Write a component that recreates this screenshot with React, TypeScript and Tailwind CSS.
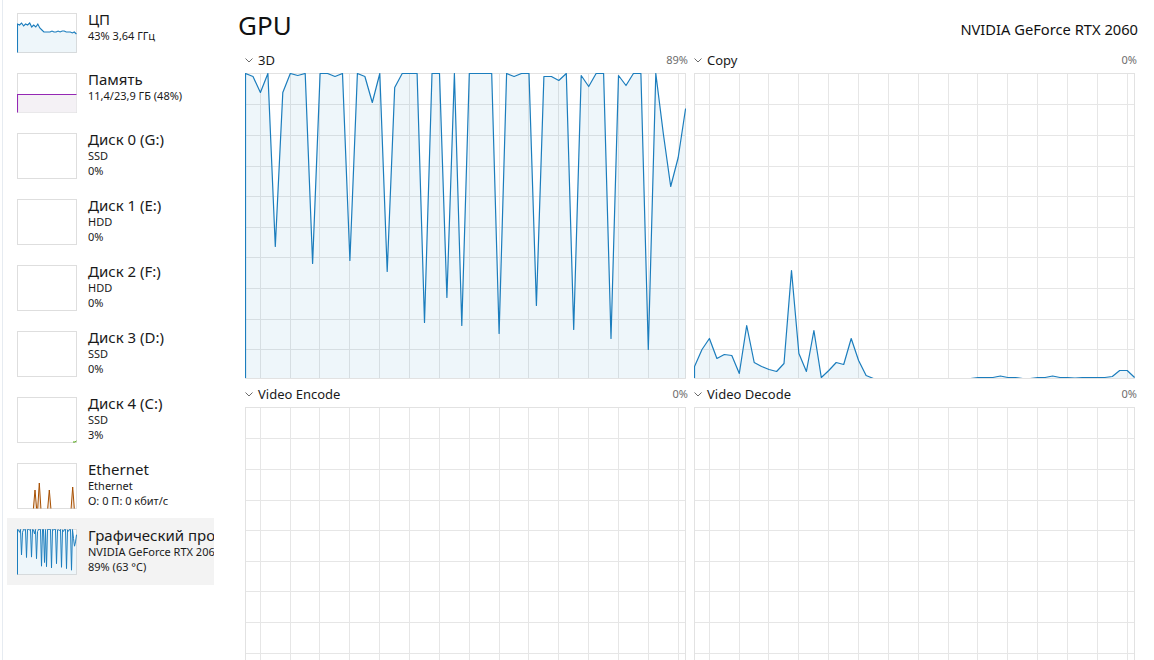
import type { ReactNode } from 'react'

// chart values are pixel offsets from the top of a 441x306 plot (305 = 0%)
const gpu3d = [
  0, 3, 19, 0, 173, 19, 0, 2, 0, 190,
  0, 0, 3, 0, 187, 0, 3, 29, 0, 198,
  14, 0, 0, 0, 249, 0, 0, 224, 0, 252,
  0, 0, 0, 0, 260, 0, 3, 0, 0, 232,
  3, 3, 7, 0, 256, 2, 13, 0, 0, 265,
  2, 12, 0, 0, 276, 0, 60, 113, 84, 35,
]

const copy = [
  293, 276, 265, 285, 281, 282, 300, 252, 289, 293,
  296, 298, 290, 197, 280, 298, 257, 304, 297, 289,
  291, 265, 287, 302, 305, 305, 305, 305, 305, 305,
  305, 305, 305, 305, 305, 305, 305, 305, 304, 304,
  304, 302.5, 304, 304, 305, 305, 304, 304, 302.5, 304,
  304, 304.5, 304, 304, 304, 304, 303, 297, 297, 304,
]

const cpu = [
  11, 12, 10, 13, 11, 12, 10, 14, 12, 14, 11, 15, 17, 19, 19,
  19, 19, 18, 19, 19, 18, 19, 18, 18, 19, 19, 19, 20, 19, 21,
]

const BLUE = '#1b7dbd'

const Chevron = () => (
  <svg width="8" height="5" viewBox="0 0 8 5" className="shrink-0">
    <path d="M0.5 0.5 L4 4 L7.5 0.5" fill="none" stroke="#6b6b6b" strokeWidth="1" />
  </svg>
)

const BigChart = ({ data }: { data?: number[] }) => {
  const w = 441
  const h = 306
  const xs: number[] = []
  for (let x = 14.7; x < w - 3; x += 29.86) xs.push(Math.round(x) + 0.5)
  const ys: number[] = []
  for (let k = 1; k < 10; k++) ys.push(Math.round(k * 30.6 + 0.7) + 0.5)

  const pts = data ? data.map((v, i) => `${(i * 7.46 + 0.5).toFixed(1)},${v + 0.5}`).join(' ') : ''
  const lastX = data ? ((data.length - 1) * 7.46 + 0.5).toFixed(1) : '0'

  return (
    <svg width={w} height={h} className="block shrink-0">
      {xs.map((x) => (
        <line key={'x' + x} x1={x} x2={x} y1={0} y2={h} stroke="#e6e6e6" />
      ))}
      {ys.map((y) => (
        <line key={'y' + y} x1={0} x2={w} y1={y} y2={y} stroke="#e6e6e6" />
      ))}
      <path d={`M0.5 0V${h} M0 0.5H${w} M${w - 0.5} 0V${h}`} fill="none" stroke="#e2e2e2" />
      {data && (
        <>
          <polygon points={`0.5,305.5 ${pts} ${lastX},305.5`} fill="rgba(17,125,187,0.07)" />
          <polyline points={`0.5,305.5 ${pts}`} fill="none" stroke={BLUE} strokeWidth="1.2" strokeLinejoin="round" />
        </>
      )}
      <line x1={0} x2={w} y1={305.5} y2={305.5} stroke="#e2e2e2" />
    </svg>
  )
}

const ChartBlock = ({ label, value, data }: { label: string; value: string; data?: number[] }) => (
  <div className="flex flex-col">
    <div className="flex h-[20px] items-center pt-[1px]">
      <Chevron />
      <span className="ml-[5px] text-[13px] text-[#1a1a1a]">{label}</span>
      <span className="ml-auto text-[11px] text-[#6d6d6d]">{value}</span>
    </div>
    <div className="mt-[3px]">
      <BigChart data={data} />
    </div>
  </div>
)

const Thumb = ({ h, children }: { h: number; children?: ReactNode }) => (
  <svg width="60" height={h} className="block shrink-0">
    <rect x="0.5" y="0.5" width="59" height={h - 1} fill="#fff" stroke="#dedede" />
    {children}
  </svg>
)

const CpuThumb = () => {
  const pts = cpu.map((v, i) => `${(i * 2.03 + 0.5).toFixed(1)},${v}`).join(' ')
  return (
    <Thumb h={40}>
      <polygon points={`0.5,39.5 ${pts} 59.5,39.5`} fill="rgba(17,125,187,0.07)" />
      <polyline points={`0.5,39.5 ${pts}`} fill="none" stroke={BLUE} strokeWidth="1.1" />
    </Thumb>
  )
}

const MemThumb = () => (
  <Thumb h={40}>
    <rect x="0.5" y="21.3" width="59" height="18.2" fill="#f4f1f5" />
    <polyline points="0.5,39.5 0.5,21.5 59.5,21.5" fill="none" stroke="#9528b4" strokeWidth="1.1" />
  </Thumb>
)

const EthThumb = () => {
  const spikes: [number, number][] = [
    [18, 27],
    [22.3, 20],
    [32.3, 27],
    [55.7, 24],
  ]
  return (
    <Thumb h={46}>
      {spikes.map(([x, y]) => (
        <g key={x}>
          <polygon points={`${x - 1.6},45.5 ${x},${y} ${x + 1.6},45.5`} fill="rgba(167,79,1,0.15)" />
          <polyline points={`${x - 1.6},45.5 ${x},${y} ${x + 1.6},45.5`} fill="none" stroke="#a74f01" strokeWidth="1" />
        </g>
      ))}
    </Thumb>
  )
}

const GpuThumb = () => {
  const pts = gpu3d.map((v, i) => `${(i + 0.5).toFixed(1)},${(v * 45 / 305 + 0.5).toFixed(1)}`).join(' ')
  return (
    <Thumb h={46}>
      <polygon points={`0.5,45.5 ${pts} 59.5,45.5`} fill="rgba(17,125,187,0.07)" />
      <polyline points={`0.5,45.5 ${pts}`} fill="none" stroke={BLUE} strokeWidth="1" />
    </Thumb>
  )
}

const DiskThumb = ({ activity }: { activity?: boolean }) => (
  <Thumb h={46}>
    {activity && <polyline points="56,45 58,45 59.5,44" fill="none" stroke="#4da60c" strokeWidth="1" />}
  </Thumb>
)

const SideItem = ({
  title,
  lines,
  thumb,
  tall,
  selected,
}: {
  title: string
  lines: string[]
  thumb: ReactNode
  tall?: boolean
  selected?: boolean
}) => (
  <div
    className={`flex items-start gap-[11px] overflow-hidden pl-[10px] ${tall ? 'h-[66px]' : 'h-[60px]'} ${
      selected ? 'h-[67px] bg-[#f3f3f3]' : ''
    }`}
  >
    <div className="mt-[11px]">{thumb}</div>
    <div className="mt-[8px] whitespace-nowrap text-[#1a1a1a]">
      <div className="text-[15px] leading-[18px]">{title}</div>
      {lines.map((l) => (
        <div key={l} className="text-[11px] leading-[15px]">
          {l}
        </div>
      ))}
    </div>
  </div>
)

export default function App() {
  return (
    <div className="flex h-[660px] w-[1154px] overflow-hidden bg-white pl-[2px] font-['Noto_Sans',sans-serif]">
      {/* left list */}
      <div className="w-[212px] shrink-0 border-l border-[#e6ebf1] pt-[2px]">
        <div className="ml-[4px] w-[207px]">
          <SideItem title="ЦП" lines={['43%  3,64 ГГц']} thumb={<CpuThumb />} />
          <SideItem title="Память" lines={['11,4/23,9 ГБ (48%)']} thumb={<MemThumb />} />
          <SideItem title="Диск 0 (G:)" lines={['SSD', '0%']} thumb={<DiskThumb />} tall />
          <SideItem title="Диск 1 (E:)" lines={['HDD', '0%']} thumb={<DiskThumb />} tall />
          <SideItem title="Диск 2 (F:)" lines={['HDD', '0%']} thumb={<DiskThumb />} tall />
          <SideItem title="Диск 3 (D:)" lines={['SSD', '0%']} thumb={<DiskThumb />} tall />
          <SideItem title="Диск 4 (C:)" lines={['SSD', '3%']} thumb={<DiskThumb activity />} tall />
          <SideItem title="Ethernet" lines={['Ethernet', 'О: 0 П: 0 кбит/с']} thumb={<EthThumb />} tall />
          <SideItem
            title="Графический процессор 0"
            lines={['NVIDIA GeForce RTX 2060', '89%  (63 °C)']}
            thumb={<GpuThumb />}
            tall
            selected
          />
        </div>
      </div>

      {/* detail pane */}
      <div className="flex-1 pl-[24px] pr-[16px]">
        <div className="flex items-baseline justify-between pt-[7px]">
          <h1 className="text-[26px] leading-[36px] text-[#111]">GPU</h1>
          <span className="text-[14.7px] text-[#111]">NVIDIA GeForce RTX 2060</span>
        </div>

        <div className="ml-[7px] mt-[7px] grid grid-cols-[443px_443px] gap-x-[6px] gap-y-[5px]">
          <ChartBlock label="3D" value="89%" data={gpu3d} />
          <ChartBlock label="Copy" value="0%" data={copy} />
          <ChartBlock label="Video Encode" value="0%" />
          <ChartBlock label="Video Decode" value="0%" />
        </div>
      </div>
    </div>
  )
}
